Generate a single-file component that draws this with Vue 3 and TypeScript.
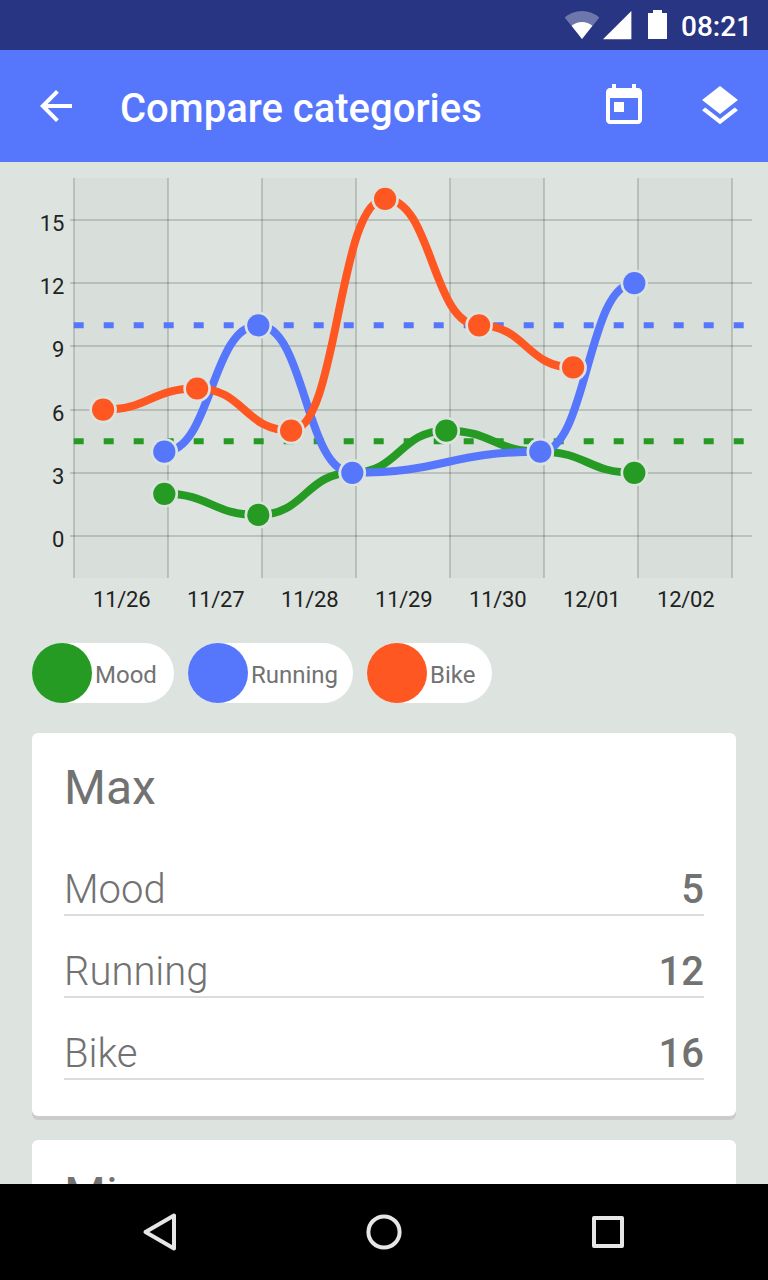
<script setup lang="ts">
interface Point { x: number; v: number }
interface Series { name: string; color: string; chipWidth: number; points: Point[] }
interface Card { title: string; rows: { name: string; value: number }[] }

const GREEN = '#259b24'
const BLUE = '#5677fc'
const ORANGE = '#ff5722'

const left = 74
const dayWidth = 94
const yOf = (v: number): number => 374 - v * 21.07

const at = (values: [number, number][], offset: number): Point[] =>
  values.map(([day, v]) => ({ x: left + offset + day * dayWidth, v }))

const series: Series[] = [
  { name: 'Mood', color: GREEN, chipWidth: 142, points: at([[0, 2], [1, 1], [2, 3], [3, 5], [4, 4], [5, 3]], 90.3) },
  { name: 'Running', color: BLUE, chipWidth: 165, points: at([[0, 4], [1, 10], [2, 3], [4, 4], [5, 12]], 90.3) },
  { name: 'Bike', color: ORANGE, chipWidth: 125, points: at([[0, 6], [1, 7], [2, 5], [3, 16], [4, 10], [5, 8]], 29.1) },
]

const targets = [
  { v: 4.5, color: GREEN },
  { v: 10, color: BLUE },
]

const ticks = [15, 12, 9, 6, 3, 0]
const days = ['11/26', '11/27', '11/28', '11/29', '11/30', '12/01', '12/02']

function curve(points: Point[]): string {
  return points
    .map((p, i) => {
      if (i === 0) return `M${p.x} ${yOf(p.v)}`
      const q = points[i - 1]
      const mid = (q.x + p.x) / 2
      return `C${mid} ${yOf(q.v)} ${mid} ${yOf(p.v)} ${p.x} ${yOf(p.v)}`
    })
    .join('')
}

const cards: Card[] = [
  { title: 'Max', rows: [{ name: 'Mood', value: 5 }, { name: 'Running', value: 12 }, { name: 'Bike', value: 16 }] },
  { title: 'Min', rows: [] },
]
</script>

<template>
  <div class="screen">
    <div class="status">
      <svg class="status-icons" width="110" height="50" viewBox="560 0 110 50">
        <path d="M582 39L564.7 17.6Q572 11 582 11T599.3 17.6Z" fill="#fff" fill-opacity=".33" />
        <path d="M582 39L571.6 25.8Q576 22 582 22T592.4 25.8Z" fill="#fff" />
        <path d="M603 39.3L631.4 11V39.3Z" fill="#fff" />
        <path d="M653 10h9v3h5v26h-19V13h5z" fill="#fff" />
      </svg>
      <span class="clock">08:21</span>
    </div>

    <header class="bar">
      <svg class="back" width="48" height="48" viewBox="0 0 24 24">
        <path d="M20 11H7.83l5.59-5.59L12 4l-8 8 8 8 1.41-1.41L7.83 13H20v-2z" fill="#fff" />
      </svg>
      <h1 class="title">Compare categories</h1>
      <svg width="48" height="48" viewBox="0 0 24 24">
        <path d="M19 3h-1V1h-2v2H8V1H6v2H5c-1.110 0-1.990.9-1.990 2L3 19c0 1.100.890 2 2 2h14c1.100 0 2-.9 2-2V5c0-1.100-.9-2-2-2zm0 16H5V8h14v11zM7 10h5v5H7z" fill="#fff" />
      </svg>
      <svg class="layers" width="48" height="48" viewBox="0 0 24 24">
        <path d="M11.990 18.540l-7.370-5.730L3 14.070l9 7 9-7-1.630-1.270-7.380 5.740zM12 16l7.360-5.730L21 9l-9-7-9 7 1.630 1.270L12 16z" fill="#fff" />
      </svg>
    </header>

    <main class="content">
      <svg class="chart" width="768" height="466" viewBox="0 0 768 466">
        <rect v-for="i in 4" :key="`b${i}`" :x="left + (i - 1) * 188" y="16" width="94" height="400" fill="#000" fill-opacity=".02" />
        <rect v-for="i in 8" :key="`v${i}`" :x="left - 1 + (i - 1) * dayWidth" y="16" width="2" height="400" class="grid" />
        <rect v-for="t in ticks" :key="`h${t}`" x="70" :y="Math.round(yOf(t)) - 1" width="682" height="2" class="grid" />
        <text v-for="t in ticks" :key="`t${t}`" x="64" :y="Math.round(yOf(t)) + 11" class="label" text-anchor="end">{{ t }}</text>
        <text v-for="(d, i) in days" :key="d" :x="121.7 + i * dayWidth" y="445" class="label" text-anchor="middle">{{ d }}</text>
        <line v-for="t in targets" :key="t.v" x1="73.7" x2="744" :y1="yOf(t.v)" :y2="yOf(t.v)" :stroke="t.color" stroke-width="6" stroke-dasharray="10 20" />
        <g v-for="s in series" :key="s.name">
          <path :d="curve(s.points)" :stroke="s.color" stroke-width="8" fill="none" />
          <g v-for="p in s.points" :key="p.x">
            <circle :cx="p.x" :cy="yOf(p.v)" r="13.8" fill="#dde3df" />
            <circle :cx="p.x" :cy="yOf(p.v)" r="11.1" :fill="s.color" />
          </g>
        </g>
      </svg>

      <div class="legend">
        <div v-for="s in series" :key="s.name" class="chip" :style="{ width: `${s.chipWidth}px` }">
          <svg width="60" height="60"><circle cx="30" cy="30" r="30" :fill="s.color" /></svg>
          <span class="chip-name">{{ s.name }}</span>
        </div>
      </div>

      <section v-for="c in cards" :key="c.title" class="card">
        <h2 class="card-title">{{ c.title }}</h2>
        <div v-for="r in c.rows" :key="r.name" class="row">
          <span>{{ r.name }}</span>
          <b class="value">{{ r.value }}</b>
        </div>
      </section>
    </main>

    <nav class="nav">
      <svg width="768" height="96" viewBox="0 0 768 96" fill="none" stroke="#e6e6e6" stroke-width="4" stroke-linejoin="round">
        <path d="M174 31.500V64.500L145.500 48Z" />
        <circle cx="384" cy="48" r="15.600" />
        <rect x="594" y="34" width="28" height="28" />
      </svg>
    </nav>
  </div>
</template>

<style>
body { margin: 0; }
</style>

<style scoped>
.screen {
  width: 768px;
  height: 1280px;
  display: flex;
  flex-direction: column;
  overflow: hidden;
  background: #dde3df;
  font-family: Roboto, sans-serif;
  color: #727272;
}
.status {
  flex: none;
  height: 50px;
  display: flex;
  align-items: center;
  justify-content: flex-end;
  background: #283583;
  padding-right: 17px;
  box-sizing: border-box;
}
.status-icons { margin-right: 11px; }
.clock {
  width: 70px;
  padding-top: 4px;
  font-size: 28px;
  font-weight: 500;
  line-height: 46px;
  color: #fff;
  white-space: nowrap;
}
.bar {
  flex: none;
  height: 112px;
  display: flex;
  align-items: center;
  background: #5677fc;
  padding: 0 24px 0 32px;
  box-sizing: border-box;
}
.back { flex: none; margin-right: 40px; }
.title {
  flex: 1;
  margin: 0;
  padding-top: 5px;
  font-size: 40px;
  font-weight: 500;
  line-height: 48px;
  color: #fff;
  white-space: nowrap;
}
.layers { margin-left: 48px; }
.content {
  flex: 1;
  min-height: 0;
  overflow: hidden;
}
.chart { display: block; }
.grid { fill: #000; fill-opacity: .15; }
.label {
  font-size: 22px;
  letter-spacing: -.25px;
  fill: #222;
}
.legend {
  display: flex;
  gap: 14px;
  padding: 15px 32px 30px;
}
.chip {
  display: flex;
  height: 60px;
  border-radius: 30px;
  background: #fff;
}
.chip svg { flex: none; }
.chip-name {
  padding-left: 3px;
  font-size: 24px;
  line-height: 64px;
}
.card {
  height: 383px;
  margin: 0 32px 24px;
  padding: 27px 32px 0;
  box-sizing: border-box;
  border-radius: 6px;
  background: #fff;
  box-shadow: 0 4px 0 #cbcbcb;
}
.card-title {
  margin: 0 0 24px;
  font-size: 48px;
  font-weight: 400;
  line-height: 56px;
}
.row {
  display: flex;
  justify-content: space-between;
  align-items: flex-end;
  height: 82px;
  box-sizing: border-box;
  padding-top: 29px;
  border-bottom: 2px solid #dcdcdc;
  font-size: 40px;
  font-weight: 300;
  line-height: 49px;
}
.card-title + .row { height: 76px; }
.value { font-weight: 500; }
.nav {
  flex: none;
  height: 96px;
  background: #000;
}
.nav svg { display: block; }
</style>
